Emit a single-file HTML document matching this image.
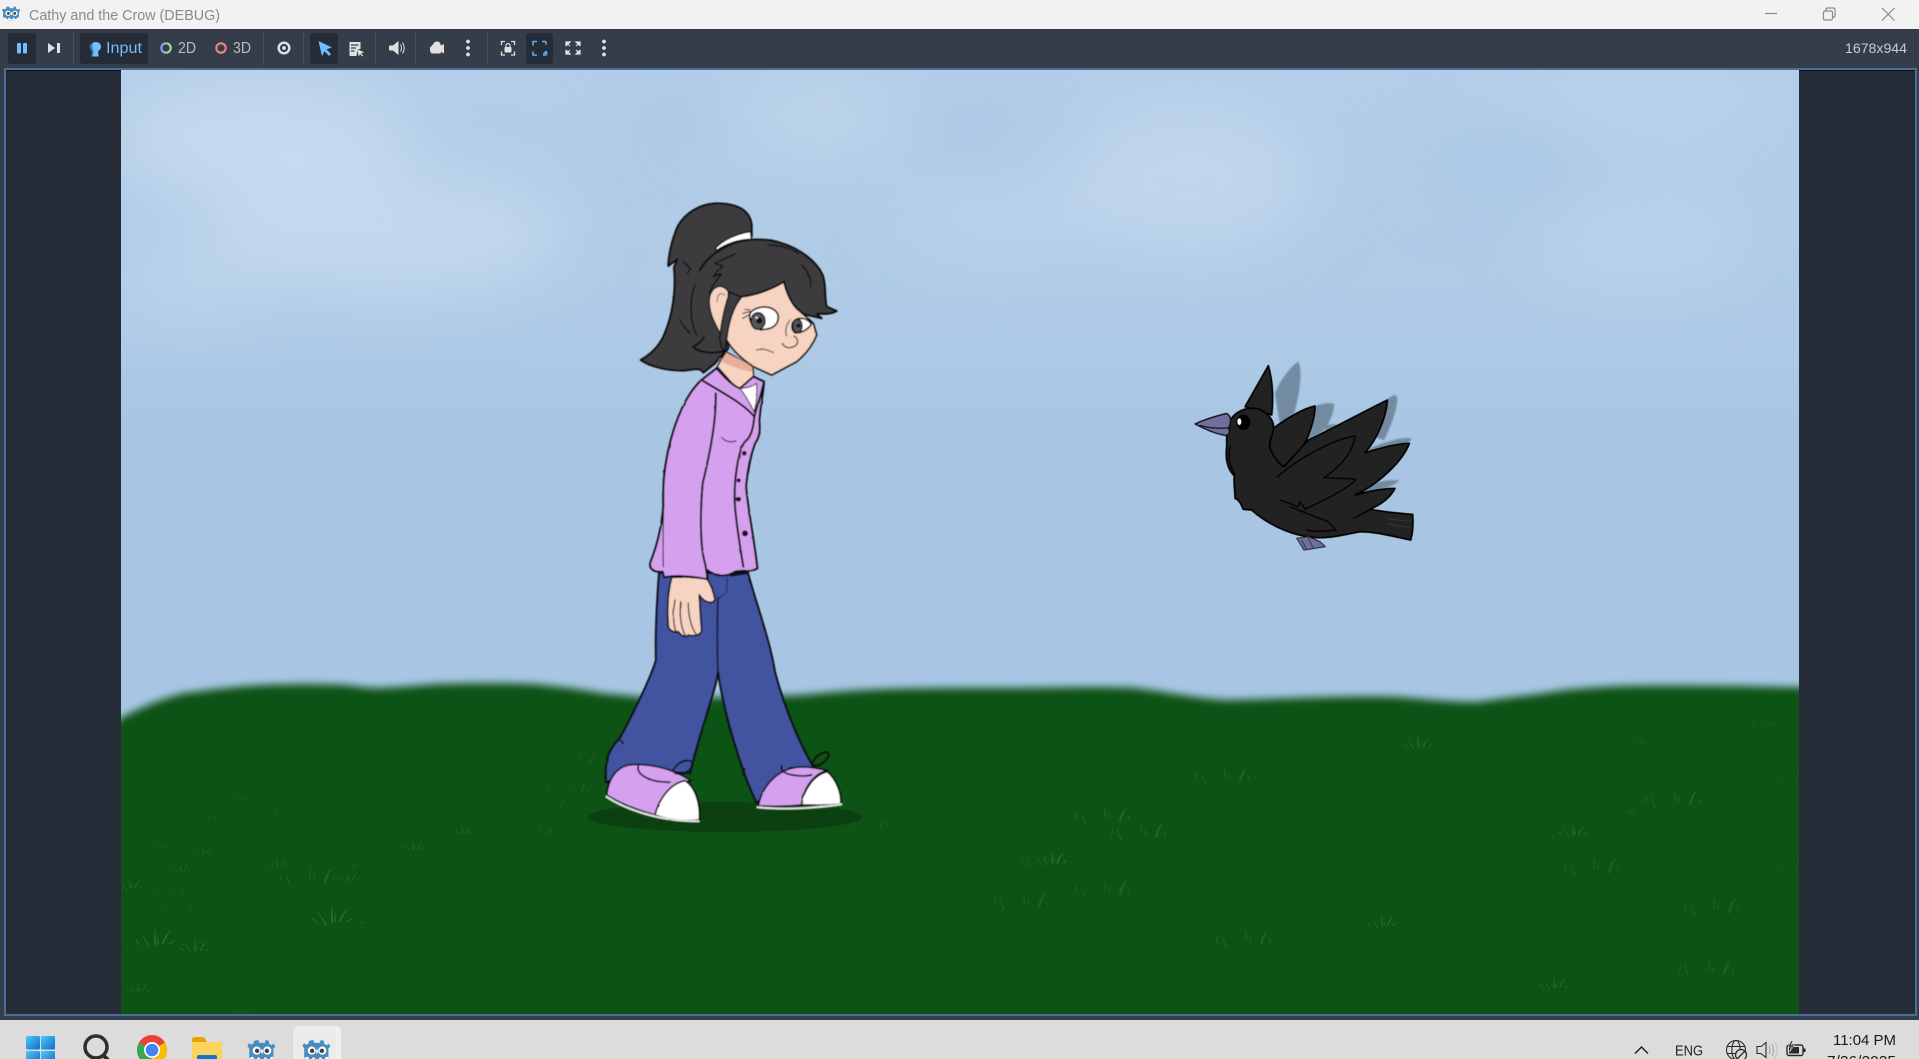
<!DOCTYPE html>
<html><head><meta charset="utf-8"><title>Cathy and the Crow (DEBUG)</title>
<style>html,body{margin:0;padding:0;background:#363d4a;overflow:hidden}svg{display:block}text{font-family:"Liberation Sans",sans-serif}</style>
</head><body>
<svg xmlns="http://www.w3.org/2000/svg" width="1919" height="1059" viewBox="0 0 1919 1059">
<defs>
<filter id="b4" x="-10%" y="-10%" width="120%" height="120%"><feGaussianBlur stdDeviation="4"/></filter>
<filter id="b3" x="-20%" y="-20%" width="140%" height="140%"><feGaussianBlur stdDeviation="2"/></filter>
<filter id="c40" x="-40%" y="-60%" width="180%" height="220%"><feGaussianBlur stdDeviation="34"/></filter>
<filter id="rough" x="-5%" y="-5%" width="110%" height="110%"><feTurbulence type="fractalNoise" baseFrequency="0.09" numOctaves="2" seed="4" result="n"/><feDisplacementMap in="SourceGraphic" in2="n" scale="1"/><feGaussianBlur stdDeviation="0.45"/></filter>
<linearGradient id="sky" x1="0" y1="0" x2="0" y2="1"><stop offset="0" stop-color="#b4cee8"/><stop offset=".28" stop-color="#aecae6"/><stop offset=".38" stop-color="#a8c6e4"/><stop offset="1" stop-color="#a8c6e4"/></linearGradient>
<linearGradient id="ring2" x1="0" y1="0" x2="1" y2="0"><stop offset="0" stop-color="#8aa0f5"/><stop offset="1" stop-color="#8ef092"/></linearGradient>
<linearGradient id="win" x1="0" y1="0" x2="1" y2="1"><stop offset="0" stop-color="#52c6fc"/><stop offset="1" stop-color="#0a6fc8"/></linearGradient>
<clipPath id="game"><rect x="121" y="70" width="1678" height="944"/></clipPath>
<symbol id="godot" viewBox="0 0 32 32" overflow="visible">
<path fill="#478cbf" d="M11.5 2.5l1 3.5h7l1-3.5 4 1 .3 3.5 2.7 1.800 3-1.800 2 3.500-2.500 2.500V24l-4 .7-.7 3-6 1.800H11l-6-1.800-.7-3-4-.7V12.500L-2 10l2-3.500 3 1.800L5.800 6.500 6 3.500z"/>
<circle cx="9.500" cy="15.500" r="5" fill="#fff"/><circle cx="22.500" cy="15.500" r="5" fill="#fff"/>
<circle cx="10" cy="15.800" r="2.700" fill="#414042"/><circle cx="22" cy="15.800" r="2.700" fill="#414042"/>
<rect x="15" y="14" width="2" height="5" rx="1" fill="#fff"/>
<path fill="#fff" d="M2.500 23l3 .5 .8 3 3.500 0 .7-2.500h2.500l.7 2.500h4.600l.7-2.500h2.500l.7 2.500 3.500 0 .8-3 3-.5V25l-2 .6-1 3.400H5.500l-1-3.400-2-.6z"/>
</symbol>
<symbol id="t1" overflow="visible">
<path d="M-32-2Q-28-1-25 1Q-28 0-32-2zM-20-8Q-17-4-12 1Q-17-3-21-7zM-15-15Q-10-8-5 0L-6.500 .5Q-11-7-15-15zM0-22Q-1.200-10-1-2L1-2Q1-10 0-22zM3-12Q2-7 2.500-3L4-3Q4-7 3-12zM18-18Q10-13 7-3L9-3Q12-12 18-18zM22-8Q18-6 14-3L16-2.500Q19-5 22-8zM33-3Q30-3.500 27-3Q30-2 33-3z"/>
</symbol>
<symbol id="t2" overflow="visible">
<path d="M-30 0Q-28-5-28-10L-29-9Q-30-4-30 0zM-19 2Q-23-5-24-12Q-24-5-20 3zM-10 0Q-13-7-13-15L-12-6Q-11-2-9 0zM0-4Q-1-10 0-17Q1-10 1-4zM4-3Q3-6 4-10L5-3zM14 0Q15-10 22-15Q18-8 16 0zM24-2Q23-5 24-8L25-2zM30-3L30-5 31-3z"/>
</symbol>
</defs>

<!-- base -->
<rect width="1919" height="1059" fill="#363d4a"/>
<rect width="1919" height="29" fill="#f2f2f2"/>
<use href="#godot" x="3" y="5" width="17" height="17"/>
<text x="29" y="20" font-size="14.500" fill="#8a8a8a" textLength="191" lengthAdjust="spacingAndGlyphs">Cathy and the Crow (DEBUG)</text>
<!-- window controls -->
<path d="M1765 13.500h12" stroke="#8a8a8a" stroke-width="1.200" fill="none"/>
<g fill="none" stroke="#8a8a8a" stroke-width="1.200"><rect x="1823.500" y="11" width="9" height="9" rx="1.500"/><path d="M1826 11V9.500q0-1.500 1.500-1.500h6q1.500 0 1.500 1.500v6q0 1.500-1.500 1.500H1832.500"/><path d="M1882 8l12.500 12.500M1894.500 8L1882 20.500"/></g>

<!-- toolbar -->
<g>
<rect x="8" y="33" width="28" height="31" rx="3" fill="#252b37"/>
<rect x="17" y="43" width="4" height="10.500" rx="1" fill="#70bfff"/><rect x="23" y="43" width="4" height="10.500" rx="1" fill="#70bfff"/>
<path d="M48 43l7 5-7 5z" fill="#e0e0e0"/><rect x="57" y="43" width="3" height="10" fill="#e0e0e0"/>
<g stroke="#4b5260" stroke-width="1"><path d="M73.500 33v31M263.500 33v31M303.500 33v31M375.500 33v31M415.500 33v31M487.500 33v31"/></g>
<rect x="80" y="33" width="68" height="31" rx="3" fill="#252b37"/>
<path d="M95.500 42c3.500 0 5.500 2 5.500 4.500s-1.800 4-3 5l.7 5h-6.400l1.200-5c-1.500-1-2.500-2.800-2.500-5 0-2.500 2-4.500 4.500-4.500z" fill="#70bfff"/>
<path d="M93 42.500c-2 .8-3.500 2-3.500 4 0 2.300 1 4 2.500 5l-1 5h1.500l1.200-5.500c-1.500-1.500-2.200-6-.7-8.500z" fill="#3d6f9c"/>
<text x="106" y="53" font-size="16" fill="#74bdf7" textLength="36" lengthAdjust="spacingAndGlyphs">Input</text>
<circle cx="166" cy="48" r="4.700" fill="none" stroke="url(#ring2)" stroke-width="2.100"/>
<text x="178" y="53" font-size="15.500" fill="#b8bbc2" textLength="18" lengthAdjust="spacingAndGlyphs">2D</text>
<circle cx="221" cy="48" r="4.700" fill="none" stroke="#fc7f7f" stroke-width="2.100"/>
<text x="233" y="53" font-size="15.500" fill="#b8bbc2" textLength="18" lengthAdjust="spacingAndGlyphs">3D</text>
<circle cx="284" cy="48" r="5.300" fill="none" stroke="#e0e0e0" stroke-width="2.400"/><circle cx="284" cy="48" r="1.900" fill="#e0e0e0"/>
<rect x="310" y="33" width="28" height="31" rx="3" fill="#252b37"/>
<path d="M318.500 41l13.500 6.500-5.500 1.800 4.500 4.700-2 2-4.500-4.700-2.500 5z" fill="#70bfff"/>
<path d="M349.500 42h11v7h-3l-1 7h-7z" fill="#e0e0e0"/>
<path d="M351 45h7.500M351 48h5M351 51h3.500" stroke="#363d4a" stroke-width="1.200" fill="none"/>
<path d="M357 49l7 3.300-2.800 1 2 2.500-1 .7-2-2.500-1.400 2.500z" fill="#e0e0e0"/>
<path d="M389 45.500h4l5.500-4.500v14l-5.500-4.500h-4z" fill="#e0e0e0"/><path d="M400.500 44.500q2 3.500 0 7M402.500 42.500q3.500 5.500 0 11" fill="none" stroke="#e0e0e0" stroke-width="1"/>
<path d="M433 44.500q1-3 4-3q2.500 0 3.500 2.500l.5 1.500 3-1.500v9.500l-3-1.500-.5 1.500h-9l-1.500-2.500v-3.500z" fill="#e0e0e0"/>
<g fill="#e0e0e0"><circle cx="468" cy="41.500" r="1.900"/><circle cx="468" cy="48" r="1.900"/><circle cx="468" cy="54.500" r="1.900"/><circle cx="604" cy="41.500" r="1.900"/><circle cx="604" cy="48" r="1.900"/><circle cx="604" cy="54.500" r="1.900"/></g>
<path d="M501.500 45v-3.500h3.500M511 41.500h3.500v3.500M514.500 51.500v3.500H511M505 55h-3.500v-3.500" fill="none" stroke="#e0e0e0" stroke-width="1.300"/>
<rect x="504.500" y="47" width="7" height="5.500" rx="1" fill="#e0e0e0"/><path d="M506 47v-1.500a2 2 0 014 0V47" fill="none" stroke="#e0e0e0" stroke-width="1.200"/>
<rect x="526" y="33" width="27" height="31" rx="3" fill="#252b37"/>
<path d="M533 45.500v-4h4M546 41.500h-4v0M546 41.500v3M533 51.500v3.500h4M546.500 51l-3 3M546.500 55h-3.500M546.500 55v-3.500" fill="none" stroke="#5bb0f2" stroke-width="1.600"/>
<path d="M566 46v-4h4l-4 4m0-4l4 4M580 46v-4h-4l4 4m0-4l-4 4M566 50v4h4l-4-4m0 4l4-4M580 50v4h-4l4-4m0 4l-4-4" fill="#e0e0e0" stroke="#e0e0e0" stroke-width="1.200"/>
<text x="1845" y="53" font-size="14" fill="#c9cbcf" textLength="62" lengthAdjust="spacingAndGlyphs">1678x944</text>
</g>

<!-- panel -->
<rect x="5" y="69" width="1911" height="946" fill="#252b37" stroke="#4a6f9a" stroke-width="2"/>
<rect x="6" y="70" width="1909" height="1" fill="#0b0e14"/>

<!-- game -->
<g clip-path="url(#game)">
<rect x="121" y="70" width="1678" height="944" fill="url(#sky)"/>
<g filter="url(#c40)" fill="#c8dcef">
<ellipse cx="260" cy="140" rx="150" ry="60" opacity=".9"/>
<ellipse cx="390" cy="235" rx="180" ry="60" opacity=".8"/>
<ellipse cx="190" cy="280" rx="80" ry="45" opacity=".5"/>
<ellipse cx="806" cy="118" rx="120" ry="36" opacity=".55"/>
<ellipse cx="1000" cy="215" rx="110" ry="45" opacity=".4"/>
<ellipse cx="1191" cy="180" rx="120" ry="75" opacity=".65"/>
<ellipse cx="1620" cy="108" rx="150" ry="32" opacity=".45"/>
<ellipse cx="1640" cy="240" rx="110" ry="45" opacity=".5"/>
</g>
<g filter="url(#c40)" fill="#a6c5e3">
<ellipse cx="688" cy="118" rx="60" ry="30" opacity=".7"/>
<ellipse cx="967" cy="131" rx="60" ry="28" opacity=".7"/>
<ellipse cx="1513" cy="161" rx="80" ry="35" opacity=".8"/>
</g>
<path filter="url(#b4)" fill="#115215" d="M100 730L121 718C140 708 160 699 185 693C210 690 240 686 265 685C290 684 320 684 345 685C355 686 365 688 375 688C395 688 420 685 440 684C470 683 500 683 530 684C555 686 580 689 600 693L640 697C690 698 750 697 803 695C830 692 860 690 890 689C930 688 960 688 1000 688C1050 688 1100 686 1136 688C1165 692 1195 698 1225 700C1280 699 1350 695 1397 697C1425 699 1450 702 1476 702C1505 698 1535 695 1565 690C1590 688 1610 686 1628 686C1680 685 1750 686 1820 688V1030H100Z"/>

<!-- grass -->
<g fill="#2f8c36" opacity=".8">
<use href="#t1" transform="translate(332 925)" opacity=".7"/>
<use href="#t1" transform="translate(155 947) scale(.95)" opacity=".7"/>
<use href="#t1" transform="translate(195 953) scale(.7)" opacity=".65"/>
<use href="#t1" transform="translate(138 993) scale(.6)" opacity=".55"/>
<use href="#t2" transform="translate(310 883)" opacity=".45"/>
<use href="#t1" transform="translate(348 882) scale(.55)" opacity=".55"/>
<use href="#t1" transform="translate(180 872) scale(.5)" opacity=".55"/>
<use href="#t1" transform="translate(277 868) scale(.5)" opacity=".55"/>
<use href="#t1" transform="translate(203 855) scale(.45)" opacity=".55"/>
<use href="#t1" transform="translate(162 848) scale(.35)" opacity=".5"/>
<use href="#t1" transform="translate(130 890) scale(.6)" opacity=".6"/>
<use href="#t2" transform="translate(172 897) scale(.6)" opacity=".3"/>
<use href="#t2" transform="translate(180 910) scale(.6)" opacity=".3"/>
<use href="#t1" transform="translate(240 802) scale(.45)" opacity=".45"/>
<use href="#t2" transform="translate(207 820) scale(.5)" opacity=".3"/>
<use href="#t2" transform="translate(268 813) scale(.45)" opacity=".3"/>
<use href="#t2" transform="translate(345 868) scale(.5)" opacity=".3"/>
<use href="#t1" transform="translate(413 851) scale(.55)" opacity=".55"/>
<use href="#t1" transform="translate(462 835) scale(.55)" opacity=".55"/>
<use href="#t2" transform="translate(540 835) scale(.6)" opacity=".35"/>
<use href="#t2" transform="translate(552 808) scale(.6)" opacity=".3"/>
<use href="#t2" transform="translate(570 793) scale(.75)" opacity=".35"/>
<use href="#t2" transform="translate(580 763) scale(.7)" opacity=".3"/>
<use href="#t1" transform="translate(260 698) scale(.3)" opacity=".3"/>
<use href="#t2" transform="translate(803 825) scale(.7)" opacity=".35"/>
<use href="#t2" transform="translate(870 828) scale(.7)" opacity=".3"/>
<use href="#t1" transform="translate(1418 749) scale(.7)" opacity=".6"/>
<use href="#t2" transform="translate(1225 782)" opacity=".45"/>
<use href="#t2" transform="translate(1633 745) scale(.5)" opacity=".35"/>
<use href="#t1" transform="translate(1770 727) scale(.4)" opacity=".45"/>
<use href="#t2" transform="translate(1745 727) scale(.45)" opacity=".3"/>
<use href="#t2" transform="translate(1105 822)" opacity=".5"/>
<use href="#t2" transform="translate(1141 838)" opacity=".5"/>
<use href="#t1" transform="translate(1052 865) scale(.7)" opacity=".75"/>
<use href="#t2" transform="translate(1045 865) scale(.8)" opacity=".45"/>
<use href="#t2" transform="translate(1105 895)" opacity=".45"/>
<use href="#t2" transform="translate(1024 908)" opacity=".45"/>
<use href="#t2" transform="translate(1246 945)" opacity=".5"/>
<use href="#t1" transform="translate(1382 928) scale(.7)" opacity=".65"/>
<use href="#t1" transform="translate(1573 837) scale(.7)" opacity=".65"/>
<use href="#t1" transform="translate(1630 815) scale(.35)" opacity=".55"/>
<use href="#t2" transform="translate(1675 805)" opacity=".5"/>
<use href="#t2" transform="translate(1594 873)" opacity=".45"/>
<use href="#t2" transform="translate(1714 913)" opacity=".45"/>
<use href="#t1" transform="translate(1554 990) scale(.7)" opacity=".65"/>
<use href="#t2" transform="translate(1709 975)" opacity=".45"/>
<use href="#t2" transform="translate(1790 797) scale(.6)" opacity=".3"/>
<use href="#t2" transform="translate(1794 782) scale(.6)" opacity=".3"/>
<use href="#t2" transform="translate(1794 870) scale(.6)" opacity=".3"/>
<use href="#t1" transform="translate(242 1014) scale(.4)" opacity=".4"/>
</g>

<!-- shadow -->
<ellipse cx="725" cy="817" rx="137" ry="15" fill="#0d4011"/>

<!-- Cathy -->
<g filter="url(#rough)">
<!-- ponytail + neck -->
<g transform="translate(600 180) scale(.33333)" stroke-linejoin="round" stroke-linecap="round">
<path fill="#3c3b3d" stroke="#111" stroke-width="6" d="M455 135C450 90 410 70 350 70C290 72 240 110 225 160C210 200 205 240 205 258L232 238L222 262C228 320 222 400 190 470C170 510 140 530 122 540C150 560 200 572 250 572C280 570 300 560 310 578L345 550L385 505L360 300L455 170Z"/>
<path fill="none" stroke="#111" stroke-width="4" d="M250 245L272 266L262 280M240 420C250 440 265 455 270 460M285 315C268 360 268 420 290 465"/>
<path fill="#f7d3c1" stroke="#111" stroke-width="4" d="M378 515L352 560C380 590 400 618 420 628L462 598L458 560Z"/>
<path fill="#e8ae97" d="M378 518L366 545C395 560 430 572 455 575L458 558Z"/>
</g>

<!-- jeans -->
<path fill="#4252a0" stroke="#0a0a0a" stroke-width="2" stroke-linejoin="round" d="M659 573L748 573C755 600 770 640 775 672C785 710 800 745 815 770L790 768L757 803C745 780 725 720 718 672C716 690 700 730 690 773L650 772L606 782C605 760 608 750 620 738C630 720 650 680 656 660C655 630 657 600 659 573Z"/>
<path fill="none" stroke="#0a0a0a" stroke-width="1.500" d="M718 597C717 625 717 650 718 675M620 740L624 744 M743 775L745 768"/>

<!-- shoes -->
<g transform="translate(570 660) scale(.33333)" stroke-linejoin="round" stroke-linecap="round" stroke="#111" stroke-width="5">
<path fill="#d5a0ee" d="M110 405C115 360 135 325 175 315C230 310 300 320 362 362C320 370 280 400 255 465C200 450 150 430 110 405Z"/>
<path fill="#fff" d="M255 465C265 420 300 370 345 362C375 380 392 430 388 480C340 485 295 480 255 465Z"/>
<path fill="none" stroke="#ddd" stroke-width="7" d="M108 410C170 450 270 485 386 484"/>
<path fill="none" d="M205 318C195 345 250 370 300 365M310 330C330 295 370 295 368 315C360 335 340 345 315 340"/>
<path fill="#d5a0ee" d="M565 438C575 380 620 330 680 322C710 318 745 325 772 332C735 340 700 380 695 435C650 440 610 440 565 438Z"/>
<path fill="#fff" d="M695 435C700 390 730 345 772 335C800 360 815 400 812 432C770 438 730 435 695 435Z"/>
<path fill="none" stroke="#ddd" stroke-width="7" d="M562 442C640 450 740 445 814 433"/>
<path fill="none" d="M635 318C625 345 690 352 725 345"/>
<ellipse cx="752" cy="297" rx="29" ry="13" fill="none" transform="rotate(-38 752 297)"/>
</g>

<!-- jacket + hand -->
<g transform="translate(620 380) scale(.33333)" stroke-linejoin="round" stroke-linecap="round">
<path fill="#0c0a12" d="M325 560L390 560L385 582L330 590Z"/>
<path fill="#d5a0ee" stroke="#0a0a0a" stroke-width="6" d="M245 0L290-35C320 0 345 20 360 25L400-10L432 5C430 40 422 70 418 120C420 150 420 170 405 190C392 225 382 270 378 320C385 400 400 460 412 565C395 575 370 570 345 575C320 592 285 590 262 570L262 598C220 590 170 585 133 592L128 575C100 578 85 565 92 545C110 500 125 440 130 380C128 300 135 260 145 210C165 120 200 40 245 0Z"/>
<path fill="#fff" stroke="#222" stroke-width="3" d="M360 25C385 24 400 18 410 10C412 40 410 70 402 95C390 70 375 45 360 25Z"/>
<g fill="none" stroke="#0a0a0a" stroke-width="6">
<path d="M287 40C290 120 270 220 248 310C240 400 240 500 255 550C260 575 262 590 262 598"/>
<path d="M245 0C310 40 370 70 403 110C410 80 425 40 432 5"/>
<path d="M403 110C400 140 395 170 375 185C355 210 340 300 345 380C350 440 360 500 370 560"/>
<path d="M405 190C395 220 390 250 385 280" stroke-width="3"/>
<path d="M305 172C315 185 330 188 348 183" stroke-width="3"/>
<path d="M130 380C130 440 128 510 130 560" stroke-width="3"/>
<path d="M322 592L320 635L295 655" stroke-width="3" stroke="#1c2a66"/>
</g>
<g fill="#1a0a28"><circle cx="373" cy="220" r="7"/><circle cx="356" cy="301" r="6"/><circle cx="355" cy="357" r="8"/><circle cx="375" cy="460" r="9"/></g>
<path fill="#f7d3c1" stroke="#0a0a0a" stroke-width="5" d="M155 592C145 630 140 680 145 740C150 755 165 758 175 755C185 770 200 772 205 765C220 770 245 765 245 750C240 700 240 670 238 645C250 665 275 675 285 660C280 630 270 610 262 598C225 590 190 590 155 592Z"/>
<path fill="none" stroke="#0a0a0a" stroke-width="3.500" d="M165 660C158 700 160 735 168 755M182 665C178 700 182 740 195 765M205 670C205 710 215 745 228 762"/>
</g>

<!-- head -->
<g transform="translate(600 180) scale(.33333)" stroke-linejoin="round" stroke-linecap="round">
<!-- face -->
<path fill="#f7d3c1" stroke="#111" stroke-width="5" d="M425 350C470 345 520 325 552 305C560 340 575 370 590 385L640 430L650 465C640 490 620 520 590 545L515 585L460 560C430 540 400 515 380 480L372 440C390 400 410 370 425 350Z"/>
<!-- hair band -->
<path fill="#fff" stroke="#111" stroke-width="4" d="M345 207C365 182 410 160 452 155L454 178C420 178 380 190 352 210Z"/>
<!-- front hair fill + outline -->
<path fill="#3c3b3d" d="M285 320C300 260 340 215 400 190C440 175 500 175 540 188C600 205 650 245 668 285C680 320 672 350 680 380L710 393C690 405 670 400 650 402L665 415L610 402L590 385C575 370 560 340 552 305C520 325 470 345 425 350C400 380 385 430 380 480L372 515L340 518C310 518 285 510 280 500C300 490 320 470 322 440C318 400 300 360 285 320Z"/>
<path fill="none" stroke="#111" stroke-width="6" d="M300 270C320 235 355 208 400 190C440 175 500 175 540 188C600 205 650 245 668 285C680 320 672 350 680 380L710 393C690 405 670 400 650 402L665 415L610 402L590 385C575 370 560 340 552 305C520 325 470 345 425 350M372 515L340 518C310 518 285 510 280 500C295 492 305 485 312 470"/>
<!-- ear -->
<path fill="#f7d3c1" stroke="#111" stroke-width="4" d="M385 335C365 305 330 320 328 360C326 400 345 430 365 470L385 420Z"/>
<path fill="none" stroke="#8a6c5c" stroke-width="3" d="M375 345C360 335 350 345 352 365"/>
<!-- strand over the ear -->
<path fill="#3c3b3d" stroke="#111" stroke-width="4" d="M425 350C400 380 385 430 380 480L372 515C362 500 358 480 360 465C365 425 375 375 390 335C400 342 412 348 425 350Z"/>
<g fill="none" stroke="#111" stroke-width="4">
<path d="M405 222L345 250L368 258L340 290L365 282C345 305 335 320 328 340"/>
<path d="M505 195C540 195 570 205 595 220"/>
<path d="M605 255C625 275 635 300 632 320"/>
</g>
<!-- eyes -->
<path fill="#fff" stroke="#111" stroke-width="5" d="M450 400C460 385 490 375 515 385C535 395 540 410 530 430C520 445 500 450 480 448C460 445 445 425 450 400Z"/>
<ellipse cx="474" cy="423" rx="21" ry="25" fill="#555" stroke="#111" stroke-width="4"/><circle cx="478" cy="422" r="9" fill="#111"/><circle cx="470" cy="413" r="4" fill="#ddd"/>
<path fill="#fff" stroke="#111" stroke-width="5" d="M578 428C590 410 620 410 634 432C625 450 600 460 585 458C575 450 575 438 578 428Z"/>
<ellipse cx="592" cy="438" rx="14" ry="20" fill="#555" stroke="#111" stroke-width="4"/><circle cx="595" cy="437" r="6" fill="#111"/>
<g fill="none" stroke="#222" stroke-width="3">
<path d="M450 395L428 400M447 405L428 415M450 390L435 388"/>
<path d="M570 420C555 440 555 455 560 468"/>
<path stroke-width="3.500" d="M582 468C600 480 595 500 570 503C555 503 548 495 548 490"/>
<path d="M470 510C490 505 505 510 520 518"/>
</g>
</g>
</g>

<!-- crow -->
<g transform="translate(1180 350) scale(.33333)" stroke-linejoin="round" stroke-linecap="round">
<g fill="#5d7487" opacity=".72" filter="url(#b3)">
<path d="M285 130C300 90 335 45 355 35C368 60 360 130 342 190L300 225Z"/>
<path d="M400 170C420 162 450 155 462 163C462 190 445 225 428 245L380 275Z"/>
<path d="M560 300C600 280 660 260 695 265C690 285 640 295 600 310Z"/>
<path d="M620 150C635 135 650 130 652 145C650 185 630 235 612 270L580 260Z"/>
<path d="M530 430C570 400 620 385 658 392C640 410 600 420 560 430Z"/>
<path d="M440 225L470 222L470 240L430 255Z"/>
</g>
<g filter="url(#rough)">
<path fill="#232323" stroke="#000" stroke-width="5" d="M195 170L265 47C280 100 280 150 275 195Z"/>
<path fill="#232323" stroke="#000" stroke-width="5" d="M280 235C320 205 370 175 405 168C405 210 385 260 370 290L310 350C285 330 265 300 270 280Z"/>
<path fill="#232323" stroke="#000" stroke-width="5" d="M140 240C150 190 190 170 230 175C265 185 285 215 280 240C275 260 265 280 270 295C280 320 300 345 312 350L385 270C440 245 530 195 622 150C620 200 590 270 555 308C600 295 650 280 688 280C670 330 600 400 525 435C560 425 610 415 645 415C630 445 600 465 570 478C610 485 660 490 698 493C700 520 698 550 692 570C640 560 590 545 540 545C490 555 430 570 380 560C320 550 260 520 215 480L190 478C185 470 180 450 165 445C165 420 160 400 163 378C145 360 135 330 140 290Z"/>
<g fill="none" stroke="#000" stroke-width="4">
<path d="M292 380C350 330 450 270 525 258C520 300 490 345 432 383C470 385 510 385 528 388C500 420 430 450 375 478L360 455L355 470L300 450"/>
<path d="M330 470C380 490 420 505 445 515L468 540C430 545 400 545 380 540"/>
<path d="M520 505C540 495 560 485 570 478"/>
<path d="M150 290C142 320 150 350 165 375"/>
<path d="M620 505L690 515M620 522L690 532" stroke-width="2.500" stroke="#3a3a3a"/>
</g>
<path fill="#6f6f9e" stroke="#222" stroke-width="3" d="M350 565L372 600L436 590L420 575L385 560Z"/>
<path fill="none" stroke="#33334f" stroke-width="3" d="M365 570L380 598M385 565L400 595"/>
<path fill="#6f6f9e" stroke="#111" stroke-width="4" d="M45 222C80 205 120 195 140 190C155 200 155 215 145 235C155 250 140 260 130 255C100 250 70 235 45 222Z"/>
<path fill="none" stroke="#111" stroke-width="3.500" d="M60 226C90 236 130 236 155 232"/>
<ellipse cx="190" cy="217" rx="21" ry="23" fill="#000"/>
<ellipse cx="178" cy="215" rx="6" ry="10" fill="#fff"/>
</g>
</g>
</g>

<!-- taskbar -->
<rect y="1020" width="1919" height="39" fill="#dcdcdc"/>
<rect x="300" y="1026" width="41" height="40" rx="5" fill="#efefef"/>
<rect x="293" y="1026" width="43" height="40" rx="5" fill="#ebebeb"/>
<g fill="url(#win)"><rect x="26" y="1036" width="14" height="13.500" rx="1.500"/><rect x="41" y="1036" width="14" height="13.500" rx="1.500"/><rect x="26" y="1051" width="14" height="13.500" rx="1.500"/><rect x="41" y="1051" width="14" height="13.500" rx="1.500"/></g>
<circle cx="96" cy="1047" r="11" fill="none" stroke="#2e2e2e" stroke-width="3.500"/><path d="M103 1055l6 6" stroke="#2e2e2e" stroke-width="4"/>
<!-- chrome -->
<circle cx="152" cy="1050" r="15" fill="#ea4335"/>
<path d="M152 1050L139 1042.500A15 15 0 00152 1065Z" fill="#34a853"/>
<path d="M152 1050L165 1042.500A15 15 0 01152 1065Z" fill="#fbbc04"/>
<circle cx="152" cy="1050" r="8" fill="#fff"/><circle cx="152" cy="1050" r="6.300" fill="#4285f4"/>
<!-- folder -->
<path d="M192 1040q0-3 3-3h7q2 0 3 1.500l2 3.500h-15z" fill="#e2a400"/>
<path d="M192 1042h30v18h-30z" fill="#fcd35c"/>
<rect x="197" y="1055" width="20" height="8" rx="2" fill="#0f77c9"/>
<use href="#godot" x="249" y="1038" width="26" height="26"/>
<use href="#godot" x="304" y="1038" width="26" height="26"/>
<!-- tray -->
<path d="M1635 1053.500l6.500-6.500 6.500 6.500" fill="none" stroke="#222" stroke-width="1.500"/>
<text x="1675" y="1055.500" font-size="15" fill="#222" textLength="28" lengthAdjust="spacingAndGlyphs">ENG</text>
<g fill="none" stroke="#2a2a2a" stroke-width="1.100">
<circle cx="1736" cy="1050" r="9.500"/><ellipse cx="1736" cy="1050" rx="4.200" ry="9.500"/><path d="M1727 1046.500h18M1727 1053.500h18"/>
<circle cx="1741" cy="1055" r="5.500" fill="#dcdcdc" stroke-width="1.300"/><path d="M1737.500 1058.500l7-7" stroke-width="1.300"/>
<path d="M1757 1046.500h4l5-4v15l-5-4h-4z"/>
<path d="M1769 1046q2 4 0 8M1772 1044q3 6 0 12" stroke="#a8a8a8"/>
<path d="M1775 1042q4 8 0 16" stroke="#c4c4c4"/>
<rect x="1787" y="1045" width="16" height="10.500" rx="2" stroke-width="1.400"/>
</g>
<path d="M1803.500 1048.500h2v3.500h-2z" fill="#2a2a2a"/><rect x="1789" y="1047" width="10" height="6.500" fill="#2a2a2a"/>
<path d="M1791 1041l-3 6h3.500l-2 5 5-7h-3.500l2-4z" fill="#2a2a2a" stroke="#dcdcdc" stroke-width=".6"/>
<text x="1833" y="1045" font-size="15" fill="#1a1a1a" textLength="63" lengthAdjust="spacingAndGlyphs">11:04 PM</text>
<text x="1827" y="1066" font-size="15" fill="#1a1a1a" textLength="69" lengthAdjust="spacingAndGlyphs">7/26/2025</text>
</svg>
</body></html>
